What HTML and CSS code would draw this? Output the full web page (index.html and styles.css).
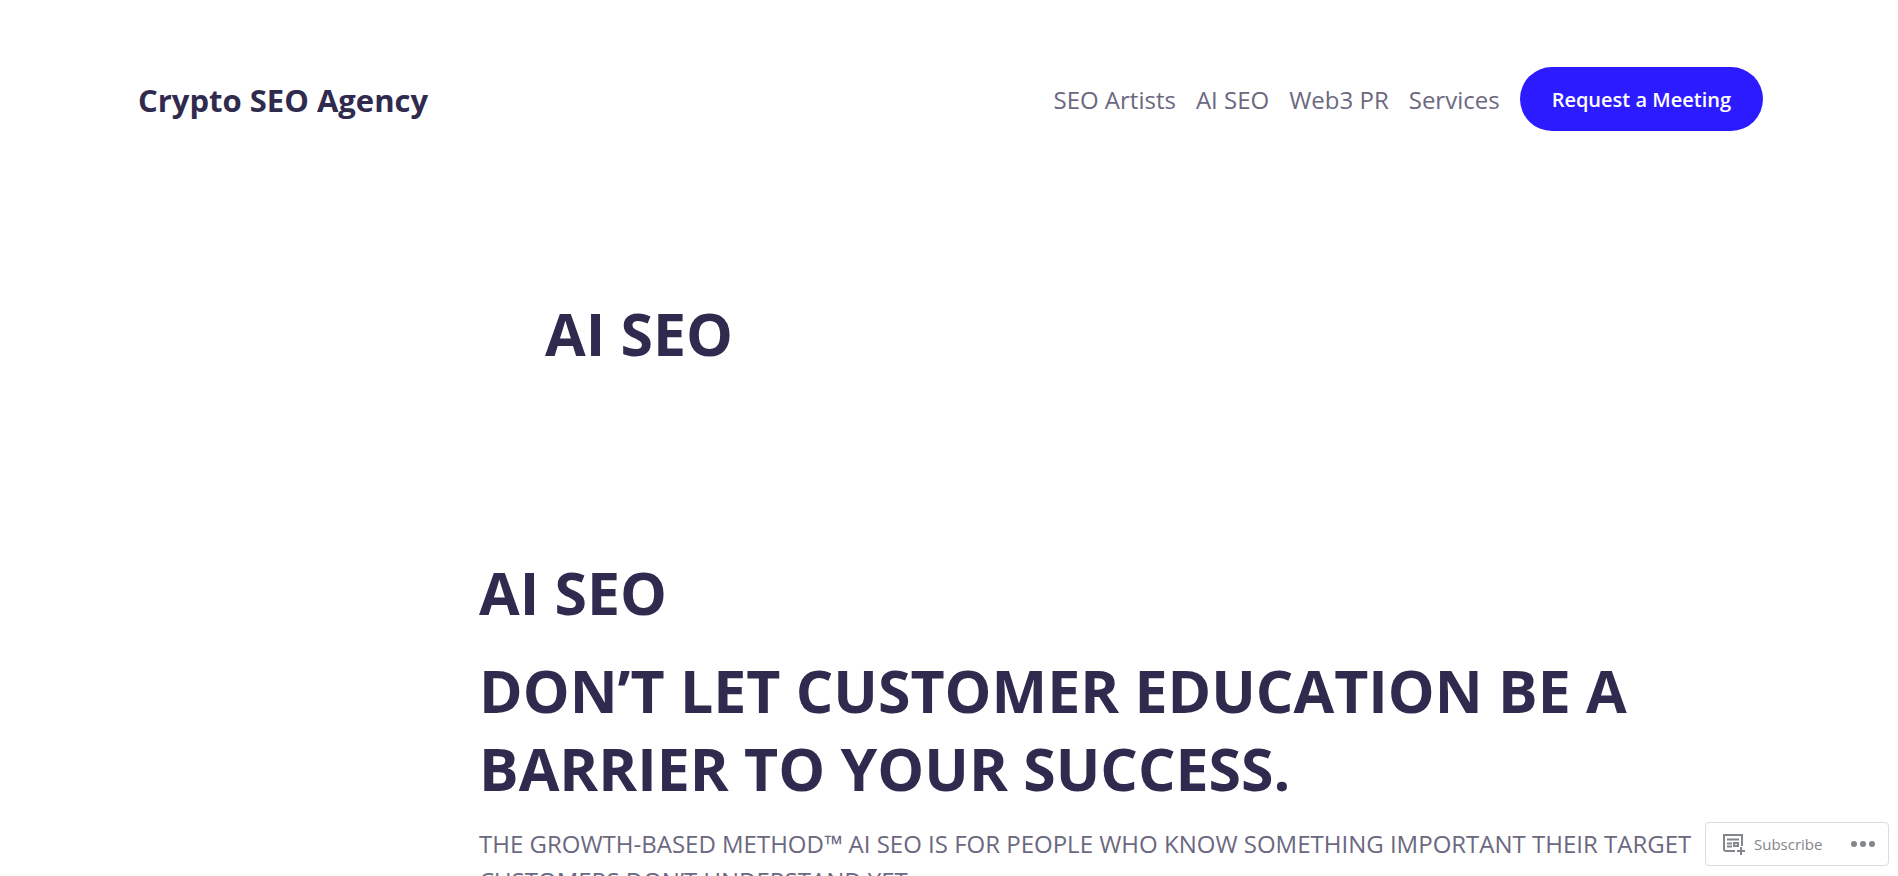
FILE: index.html
```
<!DOCTYPE html>
<html lang="en">
<head>
    <meta charset="UTF-8">
    <meta name="viewport" content="width=device-width, initial-scale=1.0">
    <title>AI SEO - Crypto SEO Agency</title>
    <link rel="stylesheet" href="styles.css">
</head>
<body>
    <header class="site-header">
        <a class="site-title" href="#">Crypto SEO Agency</a>
        <nav class="site-nav">
            <a href="#">SEO Artists</a>
            <a href="#">AI SEO</a>
            <a href="#">Web3 PR</a>
            <a href="#">Services</a>
            <a class="button" href="#">Request a Meeting</a>
        </nav>
    </header>

    <main>
        <h1 class="page-title">AI SEO</h1>
        <div class="entry-content">
            <h2>AI SEO</h2>
            <h2>DON’T LET CUSTOMER EDUCATION BE A BARRIER TO YOUR SUCCESS.</h2>
            <p>THE GROWTH-BASED METHOD™ AI SEO IS FOR PEOPLE WHO KNOW SOMETHING IMPORTANT THEIR TARGET CUSTOMERS DON’T UNDERSTAND YET.</p>
        </div>
    </main>

    <div class="actionbar">
        <button type="button" class="subscribe">
            <svg width="22" height="21" viewBox="0 0 22 21" fill="none" stroke="currentColor" aria-hidden="true">
                <path d="M12 17H3Q1 17 1 15V1H19V12" stroke-width="2"/>
                <path d="M4 5.5H16M4 9.5H9M4 12.5H9" stroke-width="2"/>
                <path d="M11 9H15V12H11Z" stroke-width="2"/>
                <path d="M18 13V21M14 17H22" stroke-width="2"/>
            </svg>
            Subscribe
        </button>
        <button type="button" class="more" aria-label="More">
            <svg width="24" height="6" viewBox="0 0 24 6" fill="currentColor" aria-hidden="true">
                <circle cx="3" cy="3" r="3"/>
                <circle cx="12" cy="3" r="3"/>
                <circle cx="21" cy="3" r="3"/>
            </svg>
        </button>
    </div>
</body>
</html>
```

FILE: styles.css
```
* {
    box-sizing: border-box;
}
body {
    margin: 0;
    background-color: #fff;
    color: #6b6880;
    font-family: "Segoe UI", "Open Sans", "Noto Sans", sans-serif;
    font-size: 24px;
    line-height: 37px;
}
a {
    color: inherit;
    text-decoration: none;
}
h1,
h2 {
    margin: 0;
    color: #302b4e;
    font-size: 59px;
    font-weight: 700;
    line-height: 78px;
}
.site-header {
    display: flex;
    flex-wrap: wrap;
    justify-content: space-between;
    align-items: center;
    padding: 67px 135px 0 138px;
}
.site-title {
    padding-top: 2px;
    color: #302b4e;
    font-size: 31px;
    font-weight: 700;
}
.site-nav {
    display: flex;
    flex-wrap: wrap;
    align-items: center;
    gap: 20px;
}
.button {
    padding: 14px 32px 13px;
    border-radius: 32px;
    background-color: #2d1bff;
    color: #fff;
    font-size: 20px;
    font-weight: 600;
}
.page-title {
    padding: 163px 135px 0 545px;
}
.entry-content {
    padding: 181px 135px 0 479px;
}
.entry-content h2 + h2 {
    margin-top: 20px;
}
.entry-content p {
    margin: 18px 0 0;
}
.actionbar {
    position: fixed;
    right: 9px;
    bottom: 10px;
    display: flex;
    align-items: center;
    justify-content: space-between;
    width: 184px;
    height: 44px;
    padding: 0 13px 0 17px;
    border: 1px solid #dcdcde;
    border-radius: 4px;
    background-color: #fff;
}
.actionbar button {
    display: flex;
    align-items: center;
    gap: 9px;
    padding: 0;
    border: none;
    background: none;
    color: #83868b;
    font-family: inherit;
    font-size: 15px;
    cursor: pointer;
}
```
